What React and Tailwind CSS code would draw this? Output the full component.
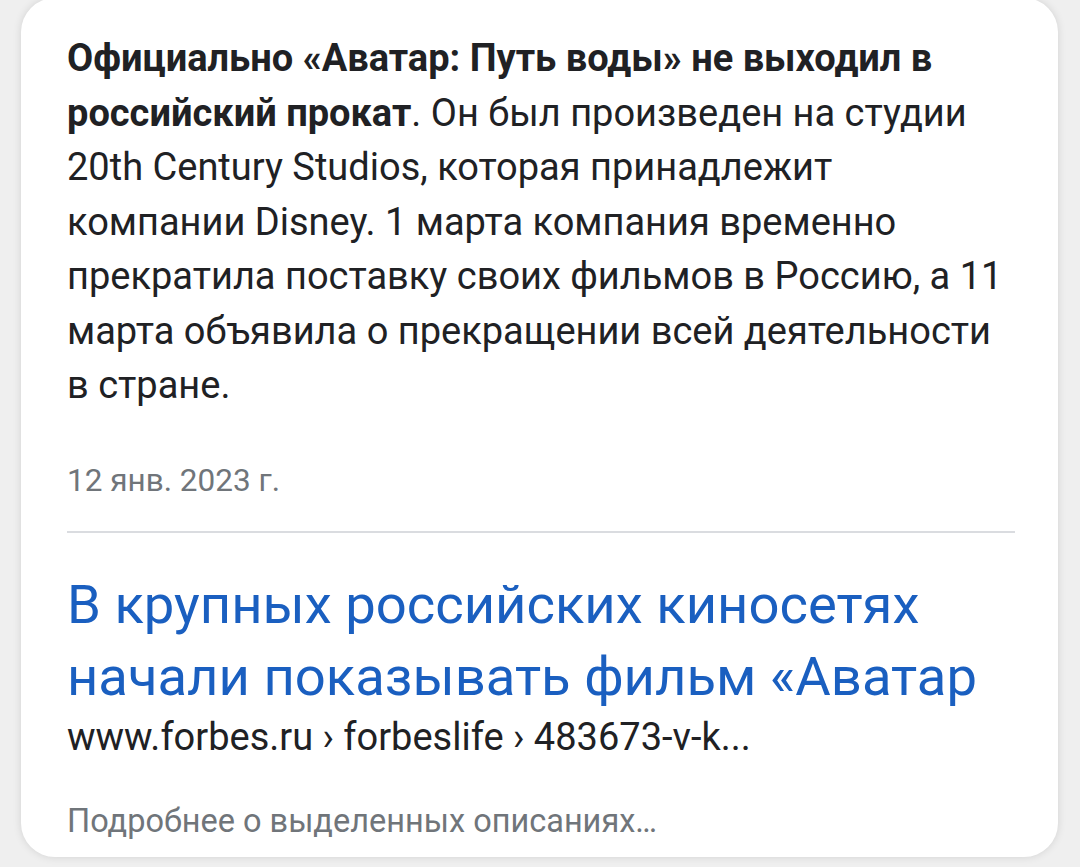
import React from "react";

const App = () => {
  return (
    <div
      className="w-[1080px] h-[867px] bg-[#efefef] pl-[21px] pr-[22px] overflow-hidden"
      style={{ fontFamily: "Roboto, 'Noto Sans', sans-serif" }}
    >
      <div className="bg-white h-[859px] rounded-[34px] -mt-[2px] pt-[33px] pl-[46px] pr-[43px] shadow-[0_0_8px_rgba(0,0,0,0.12)]">
        <p className="text-[38px] leading-[54.5px] text-[#202124] whitespace-nowrap">
          <span className="font-bold">
            Официально «Аватар: Путь воды» не выходил в
            <br />
            российский прокат
          </span>
          . Он был произведен на студии
          <br />
          20th Century Studios, которая принадлежит
          <br />
          компании Disney. 1 марта компания временно
          <br />
          прекратила поставку своих фильмов в Россию, а 11
          <br />
          марта объявила о прекращении всей деятельности
          <br />в стране.
        </p>

        <div className="mt-[50px] text-[31.5px] leading-[36px] text-[#70757a]">
          12 янв. 2023 г.
        </div>

        <div className="mt-[32px] h-[2px] bg-[#dadce0]" />

        <a className="block mt-[36px] text-[54.4px] leading-[72px] text-[#1a5fc0] whitespace-nowrap overflow-hidden">
          В крупных российских киносетях
          <br />
          начали показывать фильм «Аватар
        </a>

        <div className="mt-[2px] text-[38px] leading-[44px] text-[#202124]">
          www.forbes.ru › forbeslife › 483673-v-k...
        </div>

        <div className="mt-[44px] text-[32.5px] leading-[36px] text-[#70757a]">
          Подробнее о выделенных описаниях…
        </div>
      </div>
    </div>
  );
};

export default App;
